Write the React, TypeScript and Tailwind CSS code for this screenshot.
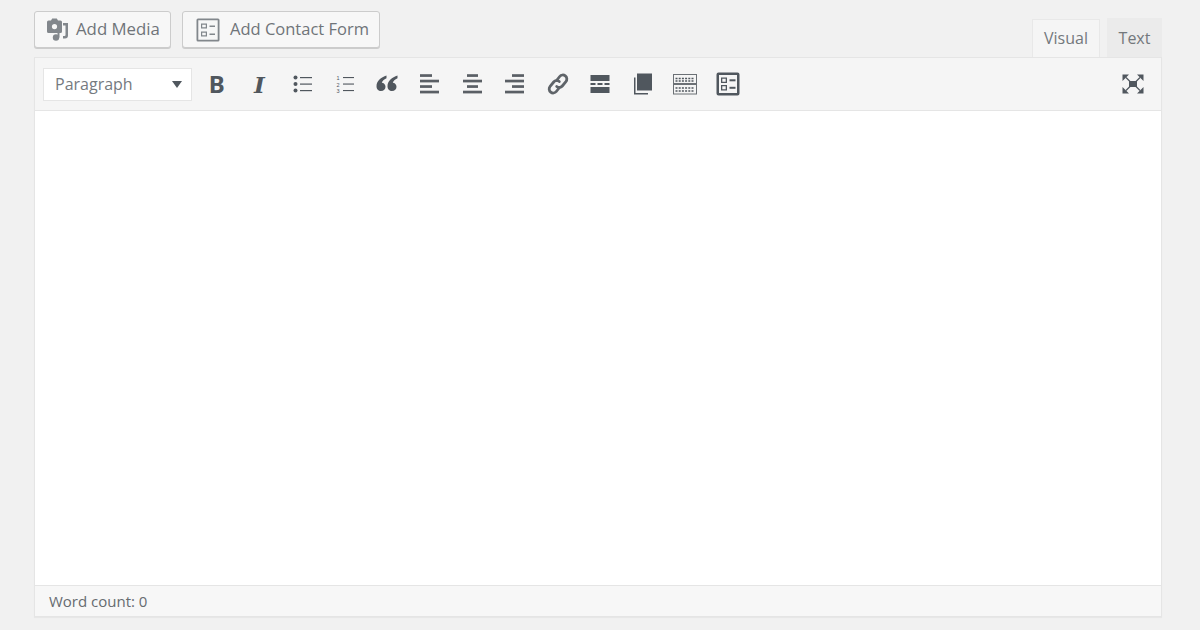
import React from 'react';

const Icon: React.FC<{ children: React.ReactNode }> = ({ children }) => (
  <svg width={24} height={24} viewBox="0 0 24 24" fill="#50575e" className="block">
    {children}
  </svg>
);

// alignment icons: four rows, odd ones short
const Bars: React.FC<{ long: number; short: [number, number] }> = ({ long, short }) => (
  <Icon>
    {[0, 1, 2, 3].map((i) => (
      <rect
        key={i}
        x={i % 2 ? long : short[0]}
        y={2.2 + i * 5.5}
        width={i % 2 ? 19 : short[1]}
        height="2.7"
        fill="#5a5f65"
      />
    ))}
  </Icon>
);

const quoteMark = "M11.500 3.500C6 5.200 1.500 9 1.500 14.200c0 2.700 1.900 4.800 4.500 4.800 2.700 0 4.500-1.900 4.500-4.300 0-2.300-1.700-4-3.700-4 .5-1.800 2.100-3.400 4.700-4.500z";

const toolbar: React.ReactNode[] = [
  <span key="b" className="text-[24px] font-bold leading-none text-[#50575e] font-['Noto_Sans',sans-serif]">B</span>,
  <span key="i" className="text-[23px] font-bold italic leading-none text-[#50575e] font-['DejaVu_Serif',serif]">I</span>,
  <Icon key="ul">
    <circle cx="5.500" cy="5.500" r="2" /><circle cx="5.500" cy="12" r="2" /><circle cx="5.500" cy="18.500" r="2" />
    <rect x="10" y="5" width="12" height="1.200" /><rect x="10" y="11.500" width="12" height="1.200" />
    <rect x="10" y="18" width="12" height="1.200" />
  </Icon>,
  <Icon key="ol">
    <text x="3.500" y="8" fontSize="5.500" fontFamily="Liberation Sans, sans-serif">1</text>
    <text x="3.500" y="14.500" fontSize="5.500" fontFamily="Liberation Sans, sans-serif">2</text>
    <text x="3.500" y="21" fontSize="5.500" fontFamily="Liberation Sans, sans-serif">3</text>
    <rect x="10" y="5" width="11" height="1.100" /><rect x="10" y="11.500" width="11" height="1.100" />
    <rect x="10" y="18" width="11" height="1.100" />
  </Icon>,
  <Icon key="quote">
    <path d={quoteMark} />
    <path d={quoteMark} transform="translate(11 0)" />
  </Icon>,
  <Bars key="left" long={2} short={[2, 12]} />,
  <Bars key="center" long={3} short={[7, 11]} />,
  <Bars key="right" long={2} short={[9, 12]} />,
  <Icon key="link">
    <g fill="none" stroke="#5f6469" strokeWidth="2.800" strokeLinecap="round">
      <path d="M10.500 8.500l3.200-4a4 4 0 0 1 5.600-.6 4 4 0 0 1 .6 5.700l-3.600 4.400a4 4 0 0 1-5.600.5" />
      <path d="M13.500 15.500l-3.200 4a4 4 0 0 1-5.600.6 4 4 0 0 1-.6-5.700l3.600-4.400a4 4 0 0 1 5.600-.5" />
    </g>
  </Icon>,
  <Icon key="more">
    <rect x="2.500" y="3" width="19" height="6" />
    <rect x="2.500" y="11" width="5" height="2" /><rect x="9.500" y="11" width="5" height="2" /><rect x="16.500" y="11" width="5" height="2" />
    <rect x="2.500" y="15" width="19" height="6" />
  </Icon>,
  <Icon key="copy">
    <rect x="6" y="1.500" width="15" height="17" />
    <path d="M3 5.500h1.500V21H17v1.500H3z" />
  </Icon>,
  <Icon key="kbd">
    <g fill="none" stroke="#6b7075" strokeWidth="1">
      <rect x="0.500" y="2.500" width="23" height="9" />
      <rect x="0.500" y="12.500" width="23" height="9.500" />
    </g>
    <g fill="none" stroke="#50575e" strokeWidth="1.500" strokeDasharray="2 1.200">
      <path d="M2.500 6.500H21.500M2.500 9H21.500M2.500 16H21.500M2.500 19H21.500" />
    </g>
  </Icon>,
  <Icon key="form">
    <path fillRule="evenodd" d="M2.500 0.500h19a2 2 0 0 1 2 2v19a2 2 0 0 1-2 2h-19a2 2 0 0 1-2-2v-19a2 2 0 0 1 2-2zM3 3v18h18V3z" />
    <path fillRule="evenodd" d="M5 5.500h6v5.500H5zM6.300 6.800v3h3.400v-3zM5 13h6v5.500H5zM6.300 14.300v3h3.400v-3z" />
    <rect x="13.500" y="7.300" width="6" height="2" /><rect x="13.500" y="14.800" width="6" height="2" />
  </Icon>,
];

const buttonClass =
  "flex h-[37px] items-center rounded-[3px] border border-[#cccccc] bg-[#f7f7f7] text-[#6f7479] shadow-[0_1px_0_#cccccc]";

export default function App() {
  return (
    <div className="flex h-[630px] w-[1200px] flex-col overflow-hidden bg-[#f1f1f1] pb-[13px] pl-[34px] pr-[38px] font-['Open_Sans','Noto_Sans',sans-serif]">
      <div className="flex h-[57px] shrink-0 items-end justify-between">
        <div className="flex gap-[11px] self-start pt-[11px]">
          <button className={`${buttonClass} w-[137px] gap-[6px] pl-[11px]`}>
            <svg width="24" height="24" viewBox="0 0 24 24" fill="#82878c" className="block">
              <path fillRule="evenodd" d="M2.500 2.500h2.500L6.200.5h4.600L12 2.500h2.500A1.500 1.500 0 0 1 16 4v9.500a1.500 1.500 0 0 1-1.500 1.500h-12A1.500 1.500 0 0 1 1 13.500V4a1.500 1.500 0 0 1 1.500-1.500zm6 3.500a2.600 2.600 0 1 0 0 5.200 2.600 2.600 0 0 0 0-5.200z" />
              <circle cx="10" cy="19.500" r="3.200" />
              <path d="M11.500 19.500V14h2v5.500zM17 5h5v12.500a3 3 0 0 1-3 3h-2v-2.500h1.500a1 1 0 0 0 1-1V7.500H17z" />
            </svg>
            <span className="mb-[2px] text-[16.800px]">Add Media</span>
          </button>
          <button className={`${buttonClass} w-[198px] gap-[10px] pl-[13px]`}>
            <svg width="24" height="24" viewBox="0 0 24 24" fill="#82878c" className="block">
              <path fillRule="evenodd" d="M2 .500h20A1.500 1.500 0 0 1 23.500 2v20a1.500 1.500 0 0 1-1.500 1.500H2A1.500 1.500 0 0 1 .500 22V2A1.500 1.500 0 0 1 2 .500zM2.300 2.300v19.400h19.400V2.300z" />
              <path fillRule="evenodd" d="M5 5.500h6v5H5zM6.200 6.700v2.600h3.600V6.700zM5 13.500h6v5H5zM6.200 14.700v2.600h3.600v-2.600z" />
              <rect x="13.500" y="7.500" width="5.500" height="1.500" /><rect x="13.500" y="15.500" width="5.500" height="1.500" />
            </svg>
            <span className="text-[16.500px]">Add Contact Form</span>
          </button>
        </div>
        <div className="flex items-end gap-[7px] text-[16px] text-[#73787c]">
          <div className="flex h-[38px] w-[68px] items-center justify-center border border-b-0 border-[#e8e8e8] bg-[#f5f5f5] pb-[2px]">Visual</div>
          <div className="flex h-[39px] w-[55px] items-center justify-center border border-b-0 border-[#ebebeb] bg-[#ebebeb]">Text</div>
        </div>
      </div>

      <div className="flex min-h-0 flex-1 flex-col border border-[#e5e5e5] bg-white shadow-[0_1px_1px_rgba(0,0,0,0.04)]">
        <div className="flex h-[53px] shrink-0 items-center justify-between border-b border-[#e5e5e5] bg-[#f5f5f5] pl-[8px] pr-[16px]">
          <div className="flex items-center">
            <div className="mr-[3.500px] flex h-[33px] w-[149px] items-center justify-between border border-[#e5e5e5] bg-white pl-[11px] pr-[9px] text-[16px] text-[#757a7f]">
              <span>Paragraph</span>
              <span className="h-0 w-0 border-x-[5px] border-t-[7px] border-x-transparent border-t-[#50575e]" />
            </div>
            {toolbar.map((icon, i) => (
              <div key={i} className="flex h-[33px] w-[42.600px] items-center justify-center">
                {icon}
              </div>
            ))}
          </div>
          <svg width="24" height="24" viewBox="0 0 24 24" fill="#50575e" className="block">
            <rect x="8" y="9" width="8" height="6" />
            <path d="M1.500 2.500h6.500L1.500 9zM22.500 2.500H16L22.500 9zM1.500 21.500H8L1.500 15zM22.500 21.500H16L22.500 15z" />
            <path d="M5 5.500L9 9.500M19 5.500L15 9.500M5 18.500L9 14.500M19 18.500L15 14.500" stroke="#50575e" strokeWidth="1.200" fill="none" />
          </svg>
        </div>
        <div className="min-h-0 flex-1 bg-white" />
        <div className="flex h-[31px] shrink-0 items-center border-t border-[#e5e5e5] bg-[#f7f7f7] pl-[14px] text-[15px] text-[#666b70]">
          Word count: 0
        </div>
      </div>
    </div>
  );
}
